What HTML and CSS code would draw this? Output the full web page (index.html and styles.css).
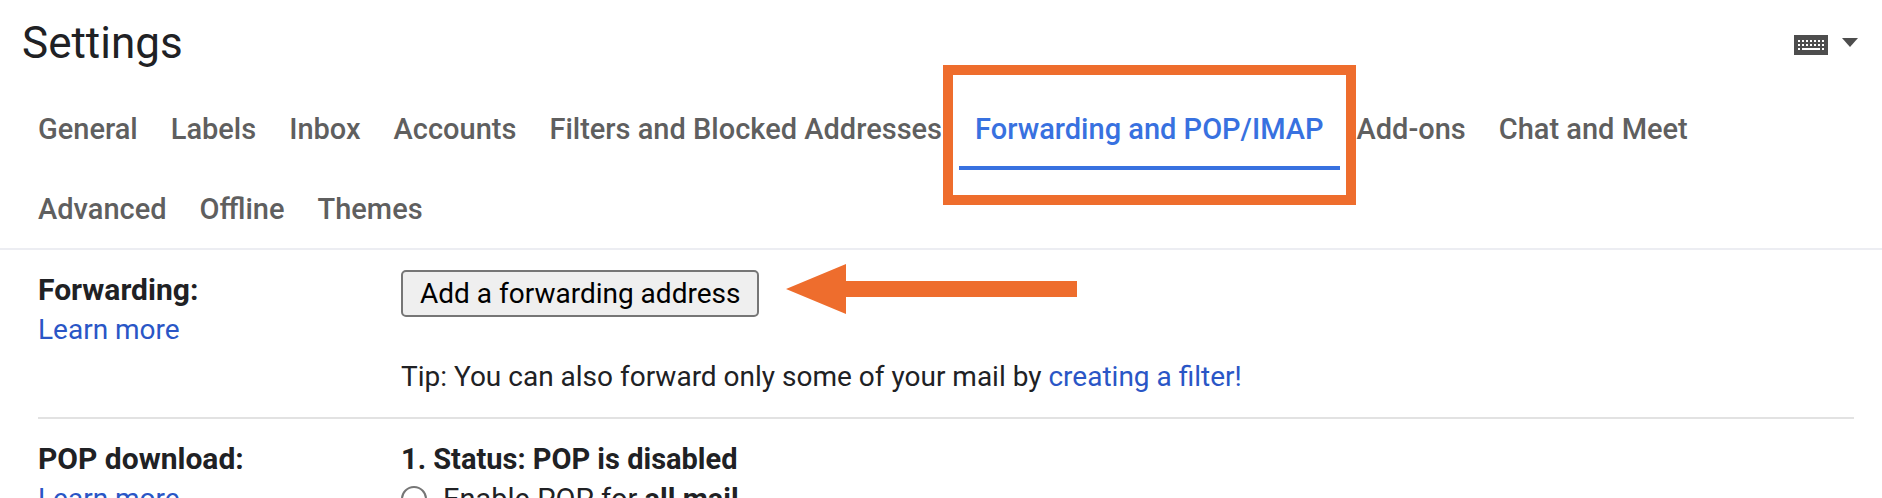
FILE: index.html
```
<!DOCTYPE html>
<html lang="en">
<head>
<meta charset="utf-8">
<title>Settings</title>
<link rel="stylesheet" href="styles.css">
</head>
<body>
<div class="page">
  <header class="header">
    <h1 class="title">Settings</h1>
    <button class="input-tools" type="button" aria-label="Input tools">
      <svg class="keyboard" width="34" height="20" viewBox="0 0 34 20" aria-hidden="true">
        <rect width="34" height="20" fill="#4d4d4d"/>
        <path d="M4 6h26M4 10h26" stroke="#fff" stroke-width="2" stroke-dasharray="2 2"/>
        <path d="M4 14h2M8 14h18M28 14h2" stroke="#fff" stroke-width="2"/>
      </svg>
      <svg class="caret" width="16" height="9" viewBox="0 0 16 9" aria-hidden="true">
        <path d="M0 0h16L8 9z" fill="#4d4d4d"/>
      </svg>
    </button>
  </header>
  <nav class="tabs" aria-label="Settings sections">
    <a class="tab" href="#general">General</a>
    <a class="tab" href="#labels">Labels</a>
    <a class="tab" href="#inbox">Inbox</a>
    <a class="tab" href="#accounts">Accounts</a>
    <a class="tab" href="#filters">Filters and Blocked Addresses</a>
    <a class="tab tab-active" href="#forwarding" aria-current="page">Forwarding and POP/IMAP</a>
    <a class="tab" href="#addons">Add-ons</a>
    <a class="tab" href="#chat">Chat and Meet</a>
    <a class="tab" href="#advanced">Advanced</a>
    <a class="tab" href="#offline">Offline</a>
    <a class="tab" href="#themes">Themes</a>
  </nav>
  <main class="settings">
    <section class="setting">
      <div class="setting-name">
        <h2 class="name">Forwarding:</h2>
        <a class="link" href="#learn-forwarding">Learn more</a>
      </div>
      <div class="setting-body">
        <div class="action">
          <button class="button" type="button">Add a forwarding address</button>
          <svg class="arrow" width="292" height="50" viewBox="0 0 292 50" aria-hidden="true">
            <path d="M0 25L60 0v17h231v16H60v17z" fill="#ee6d2d"/>
          </svg>
        </div>
        <p class="tip">Tip: You can also forward only some of your mail by <a class="link" href="#filter">creating a filter!</a></p>
      </div>
    </section>
    <section class="setting">
      <div class="setting-name">
        <h2 class="name">POP download:</h2>
        <a class="link" href="#learn-pop">Learn more</a>
      </div>
      <div class="setting-body">
        <h3 class="status">1. Status: POP is disabled</h3>
        <label class="option"><input class="radio" type="radio" name="pop"><span>Enable POP for <b>all mail</b></span></label>
      </div>
    </section>
  </main>
</div>
</body>
</html>
```
FILE: styles.css
```
* {
  box-sizing: border-box;
}

body {
  margin: 0;
  background: #fff;
  color: #202124;
  font-family: Roboto, "Liberation Sans", sans-serif;
  font-size: 28px;
  line-height: 40px;
}

.page {
  height: 100vh;
  overflow: hidden;
}

.header {
  display: flex;
  justify-content: space-between;
  align-items: center;
  height: 90px;
  padding: 0 24px 4px 22px;
}

.title {
  margin: 0;
  font-size: 44px;
  font-weight: 400;
  line-height: 56px;
}

.input-tools {
  display: flex;
  align-items: center;
  gap: 14px;
  margin-top: 4px;
  padding: 0;
  border: 0;
  background: none;
}

.caret {
  margin-bottom: 6px;
}

.tabs {
  display: flex;
  flex-wrap: wrap;
  column-gap: 1px;
  padding: 0 40px 0 22px;
  box-shadow: inset 0 -2px #ecedf2;
}

.tab {
  position: relative;
  padding: 19px 16px 17px;
  border-bottom: 4px solid transparent;
  color: #5f5f5f;
  font-size: 29px;
  font-weight: 500;
  text-decoration: none;
}

.tab-active {
  border-bottom-color: #3871e0;
  color: #3871e0;
}

.tab-active::after {
  content: "";
  position: absolute;
  inset: -25px -16px -39px;
  border: 10px solid #ee6d2d;
}

.settings {
  padding: 0 28px 0 38px;
}

.setting {
  display: grid;
  grid-template-columns: 363px 1fr;
  padding: 20px 0;
}

.setting + .setting {
  border-top: 2px solid #e2e2e2;
}

.name,
.status {
  margin: 0;
  font-size: 30px;
  font-weight: 700;
}

.status,
.option {
  font-size: 29px;
}

.link {
  color: #2a56c6;
  text-decoration: none;
}

.action {
  position: relative;
  display: flex;
}

.button {
  padding: 2px 17px 1px;
  border: 2px solid #767676;
  border-radius: 5px;
  background: #efefef;
  color: #000;
  font: inherit;
}

.arrow {
  position: absolute;
  left: 385px;
  top: -6px;
}

.tip {
  margin: 40px 0 0;
}

.option {
  display: flex;
  align-items: center;
  gap: 16px;
}

.radio {
  appearance: none;
  width: 26px;
  height: 26px;
  margin: 0;
  border: 2px solid #767676;
  border-radius: 50%;
}
```
